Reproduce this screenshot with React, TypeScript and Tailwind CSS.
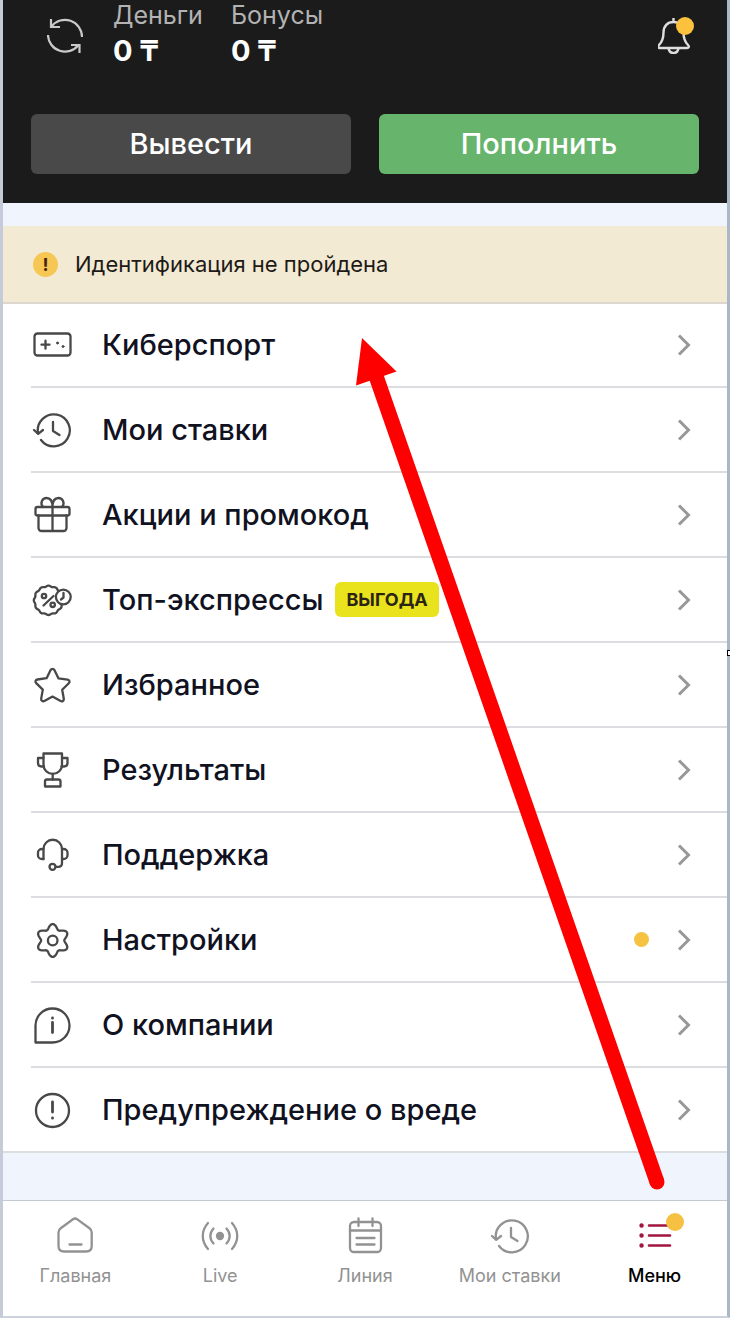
import type { ReactNode } from "react";
import { clsx } from "clsx";

interface MenuItem {
  label: string;
  icon: ReactNode;
  badge?: string;
  hasDot?: boolean;
}

interface Tab {
  label: string;
  icon: ReactNode;
  active?: boolean;
}

// Closed outline with evenly spaced rounded teeth, used by the gear and the discount seal
const wavyOutline = (cx: number, cy: number, radius: number, depth: number, teeth: number) => {
  const points: string[] = [];
  for (let deg = 0; deg < 360; deg += 3) {
    const angle = (deg * Math.PI) / 180;
    const r = radius + depth * Math.cos(teeth * angle);
    points.push(`${(cx + r * Math.sin(angle)).toFixed(2)} ${(cy - r * Math.cos(angle)).toFixed(2)}`);
  }
  return `M${points.join("L")}Z`;
};

function Icon({ children }: { children: ReactNode }) {
  return (
    <svg
      className="size-[42px] shrink-0"
      viewBox="-1 -1 42 42"
      fill="none"
      stroke="currentColor"
      strokeWidth={2.3}
      strokeLinecap="round"
      strokeLinejoin="round"
      aria-hidden="true"
    >
      {children}
    </svg>
  );
}

const historyIcon = (
  <Icon>
    <path d="M6 23A16 16 0 1 1 9 30" />
    <path d="M2 20l4.2 3.8L11 20M21 12v9l6.5 4" />
  </Icon>
);

const menuItems: MenuItem[] = [
  {
    label: "Киберспорт",
    icon: (
      <Icon>
        <rect x="2.5" y="8.5" width="36" height="22" rx="3" />
        <path d="M9.5 19.7h8M13.5 15.7v8" />
        <circle cx="25.5" cy="18" r="1" fill="currentColor" strokeWidth={1} />
        <circle cx="31" cy="21.5" r="1" fill="currentColor" strokeWidth={1} />
      </Icon>
    ),
  },
  { label: "Мои ставки", icon: historyIcon },
  {
    label: "Акции и промокод",
    icon: (
      <Icon>
        <rect x="3.5" y="12" width="34" height="8.5" rx="2" />
        <path d="M6.5 20.5V33a3 3 0 0 0 3 3h22a3 3 0 0 0 3-3V20.5M20.5 12v24" />
        <path d="M20.5 12c0-6-2-9-6-9s-7 5-3.5 9M20.5 12c0-6 2-9 6-9s7 5 3.5 9" />
      </Icon>
    ),
  },
  {
    label: "Топ-экспрессы",
    badge: "ВЫГОДА",
    icon: (
      <Icon>
        <path d={wavyOutline(16.5, 20.3, 14.2, 0.5, 12)} />
        <circle cx="12" cy="16" r="2.2" />
        <circle cx="20.7" cy="24.8" r="2.2" />
        <path d="M21.5 16l-10 9.5" />
        <circle cx="31.3" cy="17" r="7.4" fill="white" />
        <path d="M31.5 13v4.5L29 19.5" />
      </Icon>
    ),
  },
  {
    label: "Избранное",
    icon: (
      <Icon>
        <path d="M18.6 5c.8-1.6 3-1.6 3.8 0l4 8.3 9.2 1.3c1.9.3 2.6 2.4 1.2 3.6l-6.6 6.5 1.6 9c.3 2-1.5 3.2-3.2 2.3l-8.1-4.4-8.1 4.3c-1.7.9-3.5-.3-3.2-2.3l1.6-9-6.6-6.5c-1.4-1.3-.7-3.3 1.2-3.6l9.2-1.3z" />
      </Icon>
    ),
  },
  {
    label: "Результаты",
    icon: (
      <Icon>
        <path d="M11.5 3.5H30v11.2a9.25 9.25 0 0 1-18.5 0z" />
        <path d="M11.5 8H6v5c0 2 1.5 3.5 3.5 3.5H12M30 8h5.5v5c0 2-1.5 3.5-3.5 3.5h-2.5M20.7 24v5.5" />
        <path d="M13 36.5v-5a2 2 0 0 1 2-2h11.5a2 2 0 0 1 2 2v5z" />
      </Icon>
    ),
  },
  {
    label: "Поддержка",
    icon: (
      <Icon>
        <path d="M11.5 24V14a9.25 9.25 0 0 1 18.5 0v14c0 2.3-1.5 3.8-3.8 3.8h-2.5" />
        <path d="M11.5 14H10c-2.3 0-4 1.5-4 3.5v3c0 2 1.7 3.5 4 3.5h1.5M30 14h1.5c2.3 0 4 1.5 4 3.5v3c0 2-1.7 3.5-4 3.5H30" />
        <circle cx="20.5" cy="31.8" r="3" />
      </Icon>
    ),
  },
  {
    label: "Настройки",
    hasDot: true,
    icon: (
      <Icon>
        <path d={wavyOutline(20.7, 20.5, 14, 2.4, 6)} />
        <circle cx="20.7" cy="20.5" r="4.8" />
      </Icon>
    ),
  },
  {
    label: "О компании",
    icon: (
      <Icon>
        <path d="M20.5 3.5a17 17 0 0 1 0 34H3.5v-17a17 17 0 0 1 17-17z" />
        <path d="M20.5 17.5v10M20.5 13v.2" strokeWidth={2.8} />
      </Icon>
    ),
  },
  {
    label: "Предупреждение о вреде",
    icon: (
      <Icon>
        <circle cx="20.5" cy="20.5" r="16.5" />
        <path d="M20.5 12v10M20.5 28v.2" strokeWidth={2.8} />
      </Icon>
    ),
  },
];

const tabs: Tab[] = [
  {
    label: "Главная",
    icon: (
      <Icon>
        <path d="M18 3.2c1.2-.9 2.8-.9 4 0l12.5 9c1.5 1.1 2.2 2.3 2.2 4V30c0 3.5-2 5.5-5.5 5.5H9c-3.5 0-5.5-2-5.5-5.5V16.2c0-1.7.7-2.9 2.2-4zM14.5 28.5h12" />
      </Icon>
    ),
  },
  {
    label: "Live",
    icon: (
      <Icon>
        <circle cx="20" cy="20" r="3" fill="currentColor" />
        <path d="M13.5 12.5c-4.2 4.500-4.2 10.500 0 15M26.500 12.500c4.200 4.500 4.200 10.500 0 15" />
        <path d="M8 7c-7 8-7 18 0 26M32 7c7 8 7 18 0 26" />
      </Icon>
    ),
  },
  {
    label: "Линия",
    icon: (
      <Icon>
        <rect x="5" y="6" width="31" height="30" rx="4" />
        <path d="M5 14.5h31M13.5 2.5V10M27.5 2.5V10M11.5 22h18M11.5 28.5h18" />
      </Icon>
    ),
  },
  { label: "Мои ставки", icon: historyIcon },
  {
    label: "Меню",
    active: true,
    icon: (
      <Icon>
        <path d="M14 9.5h21M14 19.5h21M14 29.5h21" strokeWidth={2.6} />
        <path d="M6.5 9.5h.1M6.5 19.5h.1M6.5 29.5h.1" strokeWidth={4.4} />
      </Icon>
    ),
  },
];

function Balance({ title, value }: { title: string; value: string }) {
  return (
    <div>
      <dt className="text-[25px] leading-[30px] text-[#b3b3b3]">{title}</dt>
      <dd className="text-[29px] leading-[42px] font-bold text-white">{value}</dd>
    </div>
  );
}

function MenuRow({ item }: { item: MenuItem }) {
  return (
    <li className="ml-7 h-[85px] border-b-2 border-[#dcdde0] first:h-[84px] last:ml-0 last:pl-7">
      <a href="#" className="flex h-full items-center pr-9 text-[#484848]">
        {item.icon}
        <span className="ml-[29px] text-[29px] leading-10 font-medium text-[#11121f]">{item.label}</span>
        {item.badge && (
          <span className="ml-3 rounded-md bg-[#e9e31d] px-[11px] text-lg leading-[35px] font-bold text-[#2c2413]">
            {item.badge}
          </span>
        )}
        {item.hasDot && <span className="mr-7 ml-auto size-[15px] rounded-full bg-[#f5c242]" />}
        <svg
          className={clsx("h-[22px] w-[14px]", !item.hasDot && "ml-auto")}
          viewBox="0 0 14 22"
          fill="none"
          stroke="#989898"
          strokeWidth={3}
          aria-hidden="true"
        >
          <path d="M2 1.5l9.5 9.5L2 20.5" />
        </svg>
      </a>
    </li>
  );
}

export default function App() {
  return (
    <div className="relative border-x-3 border-b-2 border-r-[#a9b7c6] border-b-[#ccd3dc] border-l-[#c5cbd9] bg-[#f0f4fc] font-['Inter','Noto_Sans',sans-serif]">
      <header className="bg-[#1b1b1b] px-7 pb-[29px]">
        <div className="flex h-[72px] items-center pl-4">
          <button type="button" aria-label="Обновить" className="text-[#c9c9c9]">
            <svg className="size-9" viewBox="0 0 36 36" fill="none" stroke="currentColor" strokeWidth={2.2} aria-hidden="true">
              <path d="M4.500 8.500A17 17 0 0 1 35 19M1 17a17 17 0 0 0 30.500 10" />
              <path d="M4 1v8h9M24 27h8.500v8" />
            </svg>
          </button>
          <dl className="ml-[30px] flex gap-7">
            <Balance title="Деньги" value="0 ₸" />
            <Balance title="Бонусы" value="0 ₸" />
          </dl>
          <button type="button" aria-label="Уведомления" className="relative mr-[5px] ml-auto text-[#dedede]">
            <svg className="size-9" viewBox="0 0 36 36" fill="none" stroke="currentColor" strokeWidth={2.4} strokeLinejoin="round" aria-hidden="true">
              <path d="M15.500 0v4M5.500 14.500C5.500 8 9.500 4 15.500 4s10 4 10 10.500c0 7 1.500 9.500 4.500 12.500 1.500 1.500.8 3-1 3H2c-1.800 0-2.500-1.500-1-3 3-3 4.500-5.500 4.500-12.500z" />
              <path d="M10.500 30c.5 3.500 2.300 5 5 5s4.500-1.500 5-5" />
            </svg>
            <span className="absolute -top-px right-0 size-[18px] rounded-full bg-[#fcc23d]" />
          </button>
        </div>
        <div className="mt-[42px] grid grid-cols-2 gap-7 text-[29px] leading-[60px] font-medium text-white">
          <button type="button" className="rounded-md bg-[#494949]">
            Вывести
          </button>
          <button type="button" className="rounded-md bg-[#67b56d]">
            Пополнить
          </button>
        </div>
      </header>

      <main className="mt-[23px]">
        <div className="flex h-[78px] items-center border-b-2 border-[#dcd8cf] bg-[#f3ead4] px-[30px] text-[#1d1a17]">
          <span className="size-[25px] rounded-full bg-[#f7c754] text-center text-lg leading-[25px] font-bold text-[#4a2413]">
            !
          </span>
          <p className="ml-[17px] text-[22px] leading-8">Идентификация не пройдена</p>
        </div>
        <ul className="bg-white">
          {menuItems.map((item) => (
            <MenuRow key={item.label} item={item} />
          ))}
        </ul>
      </main>

      <nav className="mt-[47px] grid grid-cols-5 border-t border-[#c4cad2] bg-white pt-[14px] pb-7">
        {tabs.map((tab) => (
          <a
            key={tab.label}
            href="#"
            aria-current={tab.active ? "page" : undefined}
            className="flex flex-col items-center gap-[7px] text-[#929292]"
          >
            <span className={clsx("relative", tab.active && "text-[#a3163f]")}>
              {tab.icon}
              {tab.active && (
                <span className="absolute -top-0.5 -right-2 size-[18px] rounded-full bg-[#f6c143]" />
              )}
            </span>
            <span className={clsx("text-lg leading-6", tab.active && "font-medium text-black")}>
              {tab.label}
            </span>
          </a>
        ))}
      </nav>

      {/* Pointer from the menu tab to the first row */}
      <svg
        className="pointer-events-none absolute top-[337px] left-[350px] h-[860px] w-[320px]"
        viewBox="353 337 320 860"
        fill="#fe0000"
        aria-hidden="true"
      >
        <path d="M362 338L396.500 371.500L356 385.500Z" />
        <path d="M376 376L657 1182" stroke="#fe0000" strokeWidth={15} />
        <circle cx="657" cy="1182" r="7.500" />
      </svg>
      <span className="absolute top-[650px] -right-[3px] h-[6px] w-[3px] border border-r-0 border-black bg-white" />
    </div>
  );
}
